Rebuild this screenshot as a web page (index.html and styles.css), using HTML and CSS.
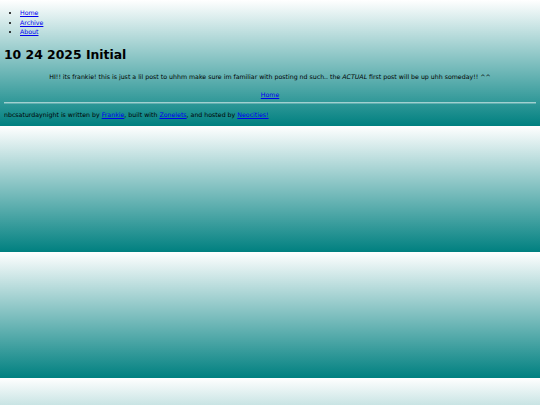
FILE: index.html
```html
<!DOCTYPE html>
<html lang="en">
<head>
<meta charset="utf-8">
<title>10 24 2025 Initial</title>
<link rel="stylesheet" href="styles.css">
</head>
<body>
<nav class="site-nav">
  <ul class="nav-list">
    <li><a href="#">Home</a></li>
    <li><a href="#">Archive</a></li>
    <li><a href="#">About</a></li>
  </ul>
</nav>
<main class="post">
  <h1 class="post-title">10 24 2025 Initial</h1>
  <p class="post-body">HI!! its frankie! this is just a lil post to uhhm make sure im familiar with posting nd such.. the <i>ACTUAL</i> first post will be up uhh someday!! ^^</p>
  <p class="post-home"><a href="#">Home</a></p>
</main>
<hr class="divider">
<footer class="site-footer">nbcsaturdaynight is written by <a href="#">Frankie</a>, built with <a href="#">Zonelets</a>, and hosted by <a href="#">Neocities!</a></footer>
</body>
</html>
```
FILE: styles.css
```css
html {
  background: linear-gradient(to bottom, #ffffff 0%, #008080 100%);
  background-size: 100% 126px;
  background-repeat: repeat;
  min-height: 100%;
}
body {
  margin: 0 4px;
  padding: 8px 0 7px;
  font-family: "DejaVu Sans", sans-serif;
  font-size: 6.25px;
  line-height: 9.5px;
  color: #000;
}
a { color: #0000ee; }
.nav-list {
  margin: 0;
  padding-left: 16px;
}
.post-title {
  margin: 10px 0 9px;
  font-size: 12.4px;
  line-height: 16px;
  font-weight: bold;
}
.post-body {
  margin: 0;
  text-align: center;
}
.post-home {
  margin: 8.5px 0 0;
  text-align: center;
}
.divider {
  margin: 2.5px 0 0;
  border: 0;
  border-top: 1px solid rgba(255,255,255,0.55);
  border-bottom: 1px solid rgba(255,255,255,0.25);
  height: 0;
}
.site-footer {
  margin-top: 6px;
}
```
